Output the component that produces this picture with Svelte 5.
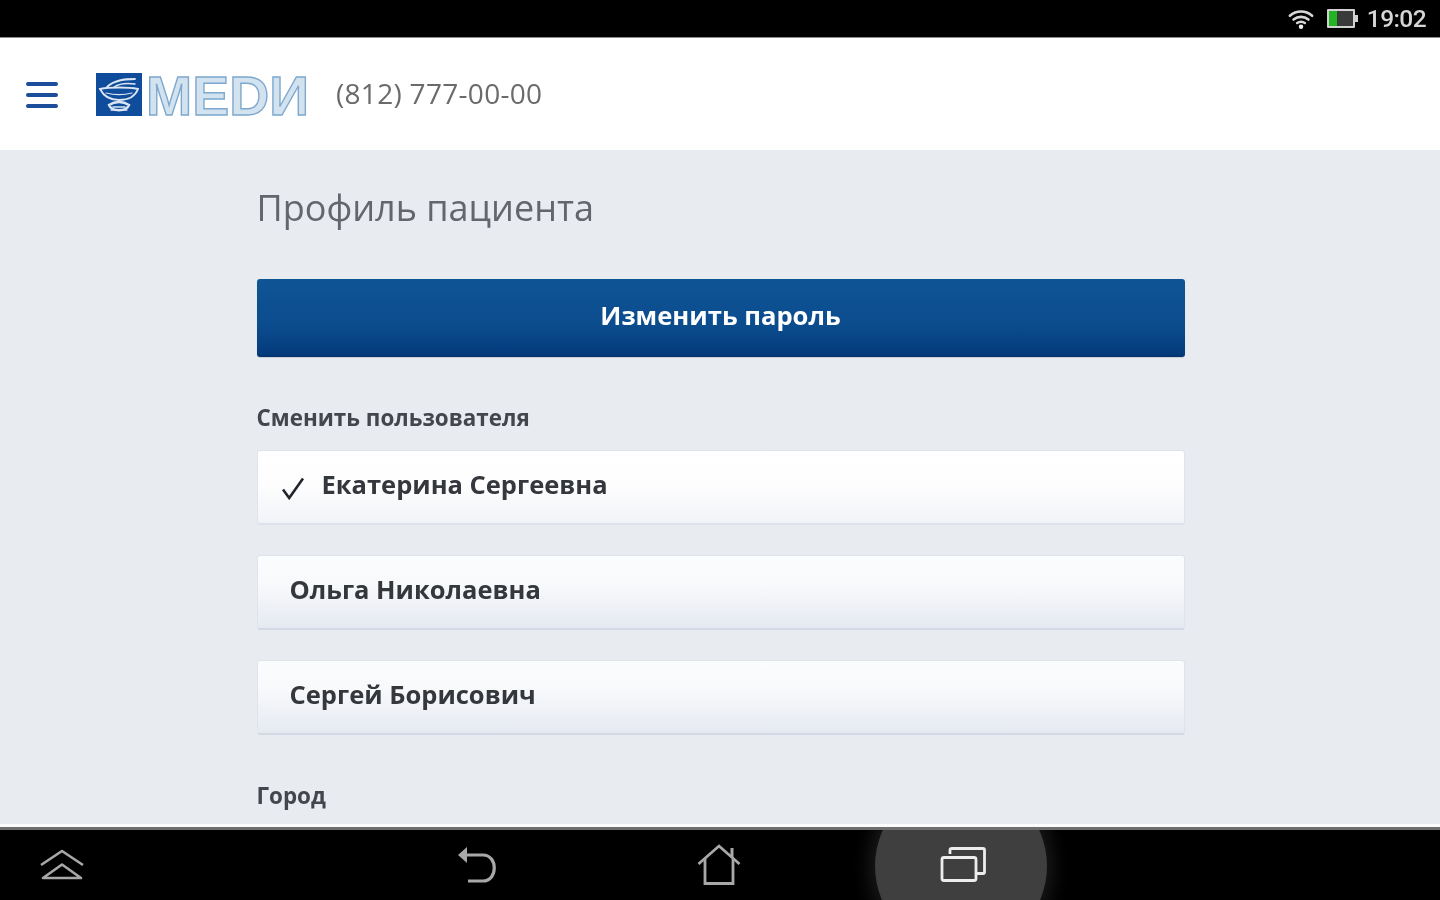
<script>
	const users = [
		{ name: 'Екатерина Сергеевна', checked: true },
		{ name: 'Ольга Николаевна', checked: false },
		{ name: 'Сергей Борисович', checked: false }
	];
</script>

<div class="screen">
	<div class="status-bar">
		<svg class="wifi" width="26" height="24" viewBox="0 0 28 24" fill="none" stroke="#d8d8d8" stroke-linecap="round">
			<path d="M2 8.5C9 2.5 19 2.5 26 8.5" stroke-width="2.8" />
			<path d="M6 12.6C10.8 8.8 17.2 8.800 22 12.6" stroke-width="2.8" />
			<path d="M9.8 16.4C12.4 14.6 15.6 14.6 18.2 16.4" stroke-width="2.6" />
			<circle cx="14" cy="20.4" r="2.4" fill="#f0f0f0" stroke="none" />
		</svg>
		<div class="battery">
			<div class="battery-body"><span class="battery-level"></span></div>
			<span class="battery-tip"></span>
		</div>
		<span class="clock">19:02</span>
	</div>

	<header class="app-header">
		<button class="menu-button" aria-label="Меню">
			<span></span><span></span><span></span>
		</button>
		<svg class="logo" width="214" height="46" viewBox="0 0 214 46">
			<rect x="0" y="1" width="46" height="43" fill="#0f4c9c" />
			<g fill="none" stroke="#dbe6f2" stroke-linecap="round">
				<path d="M11 15C18 8 28 7 39 7" stroke-width="1.8" />
				<path d="M18 15C24 11 32 11 39 12" stroke-width="1.4" />
				<path d="M4 17C14 15 32 15 42 17C39 25 31 28 23 28C15 28 8 25 4 17Z" stroke-width="1.8" />
				<path d="M10 21C18 23 28 23 36 21" stroke-width="1.2" />
				<path d="M13 33C19 29 27 29 33 33C30 40 16 40 13 33Z" stroke-width="2.4" />
				<path d="M17 35L29 35M15 38L31 38" stroke-width="1.3" />
			</g>
			<text class="logo-text" x="50" y="42.500" textLength="163" lengthAdjust="spacingAndGlyphs">MEDИ</text>
		</svg>
		<span class="phone">(812) 777-00-00</span>
	</header>

	<main class="content">
		<div class="column">
			<h1>Профиль пациента</h1>
			<button class="primary">Изменить пароль</button>

			<h2>Сменить пользователя</h2>
			<div class="user-list">
				{#each users as user}
					<div class="user-row" class:checked={user.checked}>
						{#if user.checked}
							<svg class="check" width="24" height="24" viewBox="0 0 24 24" fill="none" stroke="#22262c" stroke-width="2.6">
								<path d="M2 13.500L8.200 22L22 2.500" />
							</svg>
						{/if}
						<span>{user.name}</span>
					</div>
				{/each}
			</div>

			<h2 class="city">Город</h2>
		</div>
	</main>

	<nav class="nav-bar">
		<svg class="nav-icon collapse" width="46" height="32" viewBox="0 0 46 32" fill="none" stroke="#a8a8a8" stroke-width="2.6" stroke-linejoin="round">
			<path d="M2 16L23 2L44 16" />
			<path d="M4 29L23 15.5L42 29Z" />
		</svg>
		<svg class="nav-icon back" width="42" height="40" viewBox="0 0 42 40" fill="none" stroke="#a8a8a8" stroke-width="3.200">
			<path d="M11 9H27C42 9 42 35 27 35H12" />
			<path d="M2 9L11 1V17Z" fill="#a8a8a8" stroke="none" />
		</svg>
		<svg class="nav-icon home" width="44" height="42" viewBox="0 0 44 42" fill="none" stroke="#a8a8a8" stroke-width="2.800">
			<path d="M1.5 20L22 2L42.5 20" />
			<path d="M8 15V39.5H36V15" />
			<path d="M35 4V13" stroke-width="3" />
		</svg>
		<div class="recent">
			<svg width="46" height="38" viewBox="0 0 46 38" fill="none" stroke="#ededed" stroke-width="2.800">
				<path d="M10 7V3C10 2 11 1.500 12 1.500H43C44 1.500 44.500 2 44.500 3V25C44.500 26 44 26.500 43 26.500H37" />
				<rect x="2" y="10.500" width="34" height="23" rx="2" />
			</svg>
		</div>
	</nav>
</div>

<style>
	:global(body) {
		margin: 0;
		background: #000;
	}

	.screen {
		width: 1440px;
		height: 900px;
		display: flex;
		flex-direction: column;
		overflow: hidden;
		font-family: 'Open Sans', 'Noto Sans', sans-serif;
	}

	/* the reference is a soft upscaled capture */
	.wifi,
	.battery,
	.clock,
	.menu-button,
	.logo,
	.phone,
	h1,
	.primary,
	h2,
	.user-row,
	.nav-icon,
	.recent svg {
		filter: blur(0.6px);
	}

	.status-bar {
		height: 37px;
		flex: none;
		background: #000;
		display: flex;
		align-items: center;
		justify-content: flex-end;
		padding-right: 14px;
		box-sizing: border-box;
	}

	.wifi {
		margin-right: 13px;
		margin-top: 1px;
	}

	.battery {
		display: flex;
		align-items: center;
		margin-right: 9px;
	}

	.battery-body {
		width: 24px;
		height: 15px;
		border: 2px solid #d2d2d2;
		background: #3a3a3a;
		border-radius: 1px;
		display: flex;
	}

	.battery-level {
		width: 8px;
		background: #22b422;
	}

	.battery-tip {
		width: 3px;
		height: 7px;
		background: #d2d2d2;
	}

	.clock {
		color: #d6d6d6;
		font-size: 24.500px;
		font-weight: 500;
		letter-spacing: -0.6px;
		font-family: Roboto, sans-serif;
	}

	.app-header {
		height: 113px;
		flex: none;
		background: #fff;
		display: flex;
		align-items: center;
		padding-left: 26px;
		box-sizing: border-box;
		border-top: 1px solid #8c8c8c;
	}

	.menu-button {
		width: 32px;
		padding: 0;
		border: none;
		background: none;
		display: flex;
		flex-direction: column;
		gap: 7px;
		margin-right: 38px;
		margin-top: 1px;
	}

	.menu-button span {
		height: 4px;
		border-radius: 2px;
		background: #1b4d9b;
	}

	.logo {
		margin-right: 26px;
		margin-top: 1px;
		overflow: visible;
	}

	.logo-text {
		font-family: 'Liberation Sans', sans-serif;
		font-size: 56px;
		font-weight: 700;
		fill: #d3e2ef;
		stroke: #7ea9cf;
		stroke-width: 1.4;
	}

	.phone {
		color: #6b6b6b;
		font-size: 28px;
		letter-spacing: 0.3px;
		margin-top: -2px;
	}

	.content {
		flex: 1;
		min-height: 0;
		background: #e8ebf0;
		overflow: hidden;
		display: flex;
		justify-content: center;
	}

	.column {
		width: 928px;
		margin-left: 1px;
	}

	h1 {
		margin: 34px 0 47px 0;
		font-size: 36px;
		line-height: 48px;
		font-weight: 400;
		color: #63666c;
	}

	.primary {
		display: block;
		width: 100%;
		height: 78px;
		padding: 0 0 6px;
		border: none;
		border-radius: 3px;
		background: linear-gradient(#0f5596, #0b4c8d 60%, #043b7d 96%, #03306b);
		color: #fff;
		font-family: inherit;
		font-size: 25.600px;
		font-weight: 700;
		box-shadow: 0 1px 1px #c8cfd9;
	}

	h2 {
		margin: 46px 0 17px;
		font-size: 22.400px;
		line-height: 30px;
		font-weight: 700;
		color: #43464c;
	}

	.user-list {
		display: flex;
		flex-direction: column;
		gap: 30px;
	}

	.user-row {
		height: 75px;
		box-sizing: border-box;
		display: flex;
		align-items: center;
		padding: 0 32px 6px;
		border: 1px solid #dfe4ec;
		border-bottom: 2px solid #d2d9e5;
		border-radius: 3px;
		background: linear-gradient(#fbfcfd, #f8f9fb 40%, #e5e9f1);
		font-size: 25.500px;
		font-weight: 700;
		color: #34373c;
	}

	.user-row.checked {
		padding-left: 23px;
		gap: 17px;
		background: linear-gradient(#fff, #fdfdfe 50%, #f1f3f7);
		border-bottom-color: #dde1e9;
	}

	.check {
		margin-top: 8px;
	}

	h2.city {
		margin: 46px 0 0;
	}

	.nav-bar {
		height: 73px;
		flex: none;
		position: relative;
		background: #000;
		border-top: 3px solid #6e6e6e;
		box-shadow: 0 -3px 0 #fbfcfd;
		box-sizing: border-box;
		overflow: hidden;
	}

	.nav-icon {
		position: absolute;
	}

	.collapse {
		left: 39px;
		top: 19px;
	}

	.back {
		left: 456px;
		top: 16px;
	}

	.home {
		left: 697px;
		top: 14px;
	}

	.recent {
		position: absolute;
		left: 875px;
		top: -50px;
		width: 172px;
		height: 172px;
		padding-left: 4px;
		border-radius: 50%;
		background: #3f3f3f;
		box-shadow: 0 0 18px 6px #1a1a1a;
		display: flex;
		align-items: center;
		justify-content: center;
		box-sizing: border-box;
	}
</style>
